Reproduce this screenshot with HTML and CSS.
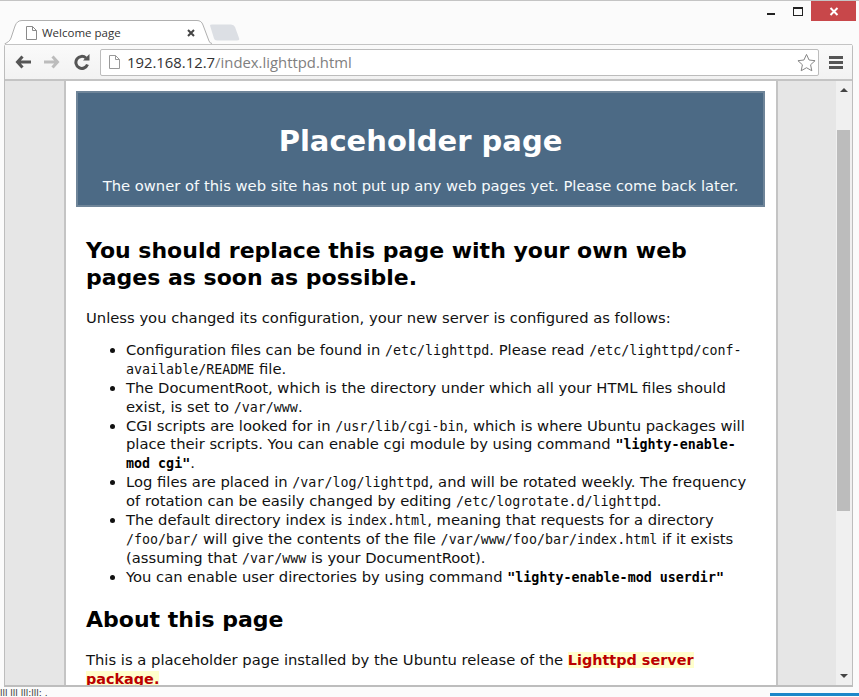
FILE: index.html
```html
<!DOCTYPE html>
<html lang="en">
<head>
<meta charset="utf-8">
<title>Welcome page</title>
<link rel="stylesheet" href="styles.css">
</head>
<body>
<div class="window">
  <div class="titlebar">
    <svg class="tabshape" width="240" height="44" viewBox="0 0 240 44">
      <path d="M4.500 44V45 M4.500 44C8 42 10 41 11 38L15 26Q17 20.500 22 20.500H197Q201.500 20.500 203 25L209 41Q210 43.500 212 43.500" fill="#fff" stroke="#b0b0b0"/>
      <path d="M210 25.500Q210 24.500 212 24.500H231Q234 24.500 235 27L239 38Q240 40.500 237 40.500H217Q214.500 40.500 214 38.500z" fill="#dcdfe4"/>
    </svg>
    <div class="tab">
      <svg class="doc" width="11" height="14" viewBox="0 0 11 14"><path d="M.5.5h6l4 4v9h-10z M6.500.5v4h4" fill="#fff" stroke="#8a8a8a"/></svg>
      <span class="tab-title">Welcome page</span>
      <svg class="tab-close" width="8" height="8" viewBox="0 0 8 8"><path d="M1 1l6 6M7 1l-6 6" stroke="#444" stroke-width="2"/></svg>
    </div>
    <div class="winbtns">
      <span class="min"></span>
      <span class="max"></span>
      <span class="close"><svg width="10" height="9" viewBox="0 0 10 9"><path d="M1.500 1l7 7M8.500 1l-7 7" stroke="#fff" stroke-width="2"/></svg></span>
    </div>
  </div>
  <div class="frame">
    <div class="toolbar">
      <svg class="nav back" width="16" height="14" viewBox="0 0 16 14"><path d="M7.500 1.500L2.500 7l5 5.500M3 7h13" fill="none" stroke="#555" stroke-width="3"/></svg>
      <svg class="nav fwd" width="16" height="14" viewBox="0 0 16 14"><path d="M8.500 1.500l5 5.500-5 5.500M13 7H0" fill="none" stroke="#bcbcbc" stroke-width="3"/></svg>
      <svg class="nav reload" width="16" height="16" viewBox="0 0 16 16"><path d="M13.500 10.500A6 6 0 1 1 12 4" fill="none" stroke="#555" stroke-width="3"/><path d="M9 6.500h6.500V0z" fill="#555"/></svg>
      <div class="omnibox">
        <svg width="11" height="14" viewBox="0 0 11 14"><path d="M.5.5h6l4 4v9h-10z M6.500.5v4h4" fill="#fff" stroke="#999"/></svg>
        <span class="url"><span class="host">192.168.12.7</span>/index.lighttpd.html</span>
        <svg class="star" width="19" height="19" viewBox="0 0 20 19"><path d="M10 1l2.700 5.900 6.300.7-4.700 4.300 1.300 6.300L10 15l-5.600 3.200 1.300-6.300L1 7.600l6.300-.7z" fill="#fff" stroke="#808080"/></svg>
      </div>
      <div class="menu"><i></i><i></i><i></i></div>
    </div>
    <div class="viewport">
      <div class="gutter"></div>
      <div class="page">
        <div class="banner">
          <h1>Placeholder page</h1>
          <p>The owner of this web site has not put up any web pages yet. Please come back later.</p>
        </div>
        <div class="main">
          <h2>You should replace this page with your own web pages as soon as possible.</h2>
          <p>Unless you changed its configuration, your new server is configured as follows:</p>
          <ul>
            <li>Configuration files can be found in <code>/etc/lighttpd</code>. Please read <code>/etc/lighttpd/conf-available/README</code> file.</li>
            <li>The DocumentRoot, which is the directory under which all your HTML files should exist, is set to <code>/var/www</code>.</li>
            <li>CGI scripts are looked for in <code>/usr/lib/cgi-bin</code>, which is where Ubuntu packages will place their scripts. You can enable cgi module by using command <b class="cmd">"lighty-enable-mod cgi"</b>.</li>
            <li>Log files are placed in <code>/var/log/lighttpd</code>, and will be rotated weekly. The frequency of rotation can be easily changed by editing <code>/etc/logrotate.d/lighttpd</code>.</li>
            <li>The default directory index is <code>index.html</code>, meaning that requests for a directory <code>/foo/bar/</code> will give the contents of the file <code>/var/www/foo/bar/index.html</code> if it exists (assuming that <code>/var/www</code> is your DocumentRoot).</li>
            <li>You can enable user directories by using command <b class="cmd">"lighty-enable-mod userdir"</b></li>
          </ul>
          <h2 class="about">About this page</h2>
          <p>This is a placeholder page installed by the Ubuntu release of the <a class="pkg">Lighttpd server package.</a></p>
        </div>
      </div>
      <div class="gutter right"></div>
      <div class="scrollbar">
        <span class="up"></span>
        <div class="thumb"></div>
        <span class="down"></span>
      </div>
    </div>
  </div>
  <div class="taskbar"><span class="task-text">lll lll lll:lll: .</span><span class="task-active"></span></div>
</div>
</body>
</html>
```
FILE: styles.css
```css
* { box-sizing: border-box; }
html, body { margin: 0; padding: 0; height: 100%; background: #fff; overflow: hidden; }
.window { width: 859px; height: 697px; display: flex; flex-direction: column; background: #fbfbfb; border-top: 1px solid #c4c4c4; font-family: "DejaVu Sans", Verdana, sans-serif; }

.titlebar { height: 43px; display: flex; align-items: flex-end; padding-left: 26px; flex: none; position: relative; }
.tabshape { position: absolute; left: 0; top: -1px; }
.tab { width: 169px; height: 23px; position: relative; display: flex; align-items: center; gap: 5px; }
.tab-title { font: 11.500px "Open Sans", sans-serif; color: #333; flex: 1; }
.tab-close { flex: none; }
.winbtns { position: absolute; top: 0; right: 3px; display: flex; align-items: flex-start; }
.min { width: 8px; height: 2px; background: #222; margin: 12px 18px 0 0; }
.max { width: 10px; height: 9px; border: 1px solid #222; border-top-width: 2px; margin: 6px 8px 0 0; }
.close { width: 45px; height: 20px; background: #c8474a; display: flex; align-items: center; justify-content: center; }

.frame { flex: 1; min-height: 0; margin: 0 6px 8px 4px; display: flex; flex-direction: column; border: 1px solid #bdbdbd; border-top: 0; border-bottom-width: 2px; border-radius: 3px 3px 0 0; }
.toolbar { height: 37px; flex: none; display: flex; align-items: center; padding: 0 9px 0 10px; background: linear-gradient(#fafafa 0, #f2f2f2 100%); border-bottom: 2px solid #c4c4c4; border-top: 1px solid #c4c4c4; }
.nav { flex: none; }
.back { margin-right: 13px; }
.fwd { margin-right: 14px; }
.reload { margin-right: 10px; }
.omnibox { flex: 1; height: 27px; background: #fff; border: 1px solid #bcbcbc; border-radius: 2px; display: flex; align-items: center; padding: 0 2px 0 8px; gap: 7px; }
.url { flex: 1; font: 14.850px "Open Sans", sans-serif; color: #808080; }
.host { color: #333; }
.menu { width: 14px; margin-left: 10px; display: flex; flex-direction: column; gap: 2px; }
.menu i { display: block; height: 3px; background: #555; }

.viewport { flex: 1; min-height: 0; display: flex; overflow: hidden; }
.gutter { width: 61px; flex: none; background: #e6e6e6; border-right: 2px solid #c4c4c4; }
.gutter.right { width: 60px; border-right: 0; border-left: 2px solid #c4c4c4; }
.page { width: 710px; flex: none; background: #fff; padding: 10px 11px 0 10px; overflow: hidden; }
.banner { background: #4c6a85; border: 2px solid #6f8599; color: #fff; text-align: center; height: 116px; padding-top: 30px; }
.banner h1 { margin: 0; font-size: 29px; line-height: 36px; font-weight: bold; }
.banner p { margin: 17px 0 0; font-size: 14.750px; line-height: 19px; color: #f6fafc; }
.main { padding: 0 9px 0 10px; color: #111; font-size: 14.750px; line-height: 18.900px; }
.main h2 { margin: 30px 0 0; font-size: 22px; line-height: 27px; font-weight: bold; color: #000; }
.main h2.about { margin-top: 19px; }
.main p { margin: 18px 0 0; }
.main ul { margin: 13px 0 0; padding-left: 40px; }
code { font-family: "DejaVu Sans Mono", monospace; font-size: 13.330px; line-height: 1; }
.cmd { font-family: "DejaVu Sans Mono", monospace; font-size: 13.330px; line-height: 1; font-weight: bold; color: #000; }
.pkg { font-weight: bold; font-size: 14.400px; color: #bb0000; background: #ffffcc; }

.scrollbar { flex: 1; background: #f0f0f0; position: relative; display: flex; flex-direction: column; align-items: center; }
.up { width: 0; height: 0; border: 4px solid transparent; border-top: 0; border-bottom: 4px solid #444; margin-top: 7px; }
.thumb { width: 13px; height: 381px; background: #bcbcbc; margin-top: 38px; align-self: flex-start; margin-left: 1px; }
.down { width: 0; height: 0; border: 4px solid transparent; border-bottom: 0; border-top: 4px solid #444; margin-top: auto; margin-bottom: 7px; }

.taskbar { height: 8px; flex: none; margin-top: -6px; display: flex; justify-content: space-between; overflow: hidden; }
.task-text { font: 9px "DejaVu Sans", sans-serif; line-height: 8px; color: #333; }
.task-active { width: 89px; height: 3px; margin-top: 4px; background: #1c87c9; }
```
